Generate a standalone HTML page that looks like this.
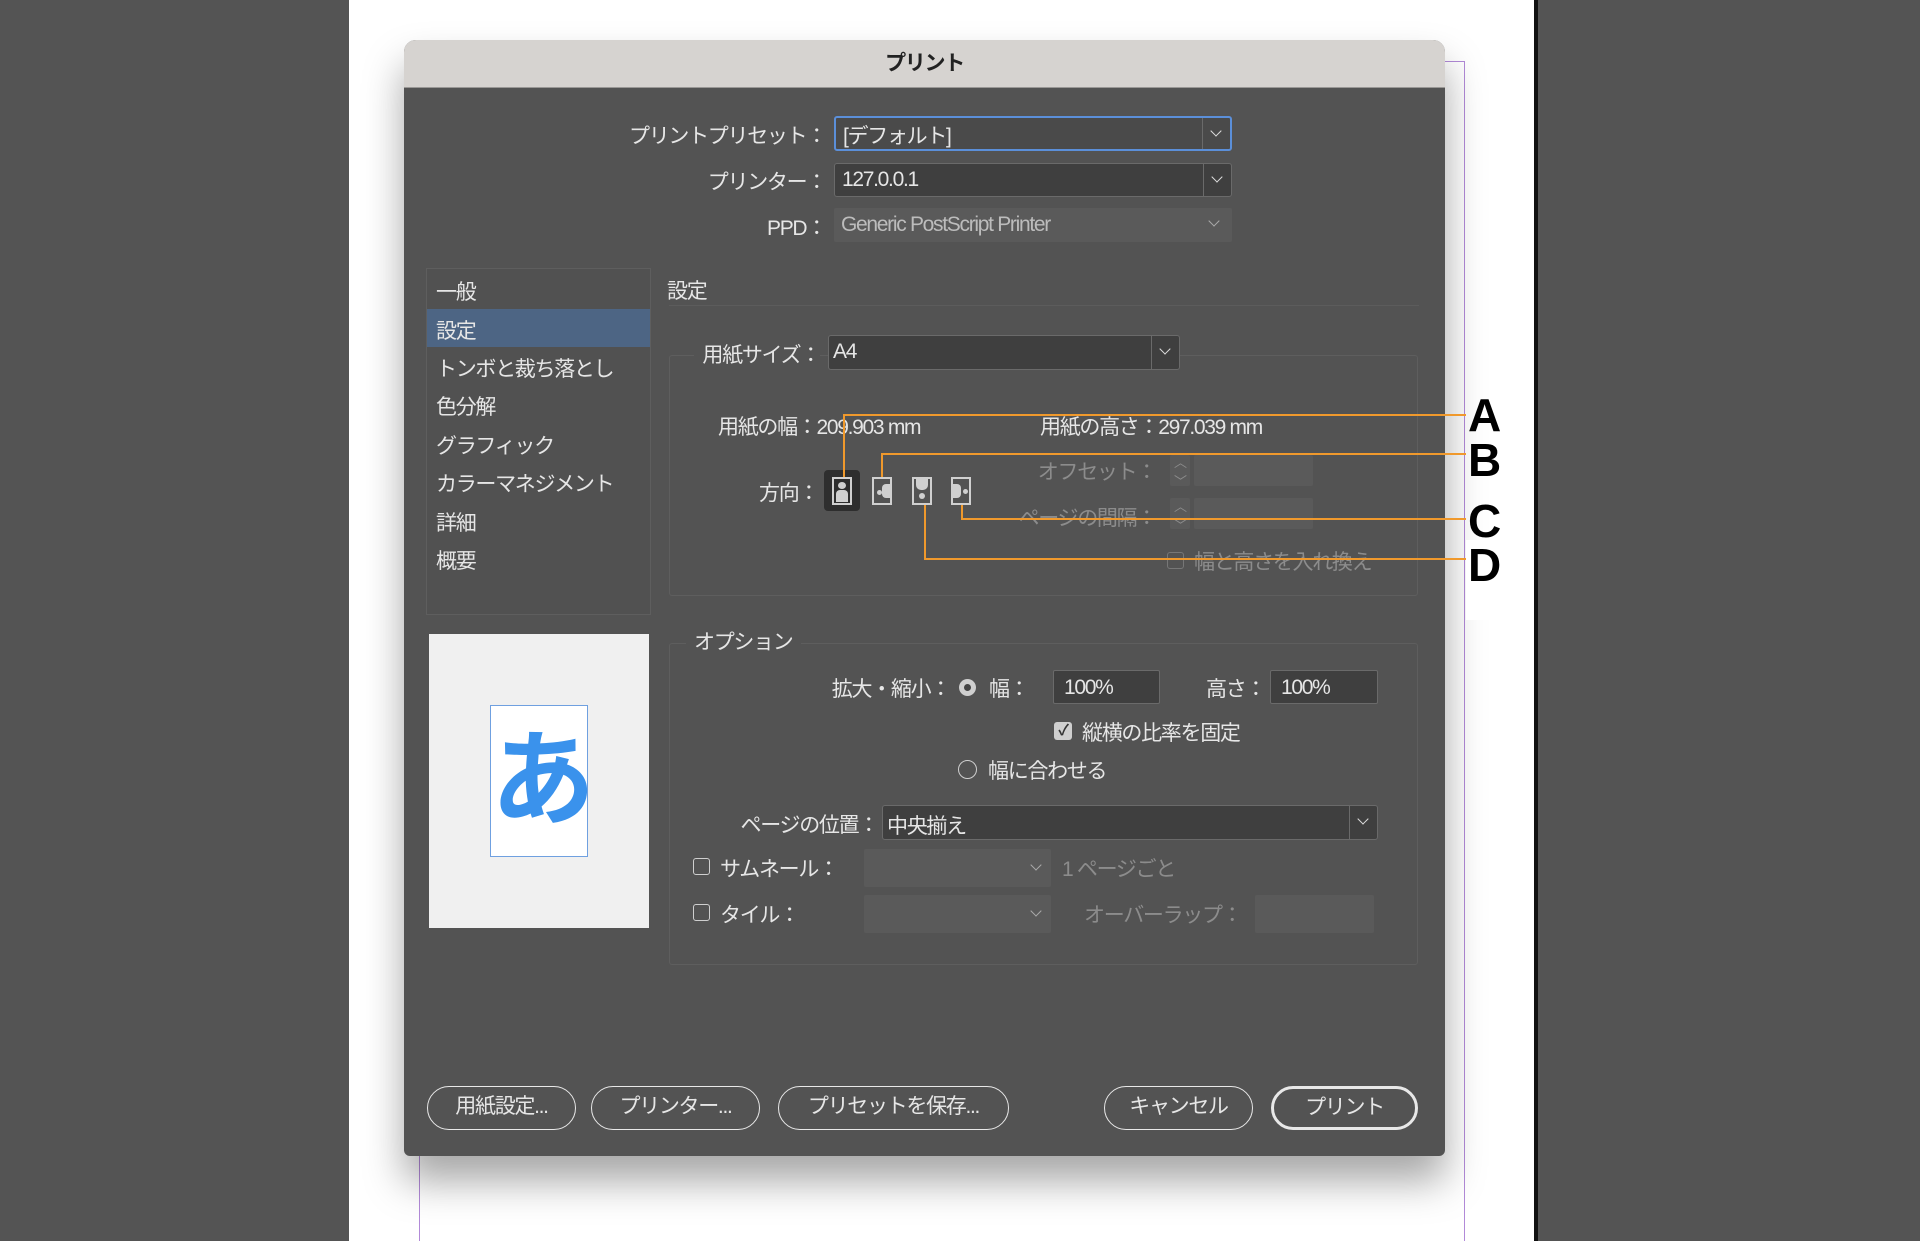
<!DOCTYPE html>
<html><head><meta charset="utf-8"><style>
*{margin:0;padding:0;box-sizing:border-box}
body{width:1920px;height:1241px;position:relative;overflow:hidden;background:#fff;font-family:"Liberation Sans","Noto Sans CJK JP",sans-serif;color:#e6e6e6;font-size:21px;letter-spacing:-1.3px}
.a{position:absolute;white-space:nowrap}
.dis{color:#8c8c8c}
.sel{position:absolute;background:#3f3f3f;border:1px solid #6a6a6a;border-radius:3px}
.sel .v{position:absolute;right:0;top:0;bottom:0;width:28px;border-left:1px solid #6a6a6a}
.chev{position:absolute;width:8px;height:8px;border-right:1.6px solid #ddd;border-bottom:1.6px solid #ddd;transform:rotate(45deg)}
.btn{position:absolute;top:1086px;height:44px;border:1.6px solid #e8e8e8;border-radius:22px;text-align:center;line-height:40px;font-size:21px}
.cb{position:absolute;width:17px;height:17px;border:1.5px solid #cfcfcf;border-radius:3px}
.fld{position:absolute;background:#3f3f3f;border:1px solid #6a6a6a;border-radius:2px;padding-left:10px;line-height:38px}
.dfld{position:absolute;background:#5a5a5a;border-radius:2px}
.or{position:absolute;background:#f0992c}
.ic{position:absolute;top:477px;width:20px;height:28px;border:2.5px solid #d0d0d0}
.L{position:absolute;font-weight:bold;color:#000;font-size:46px;font-family:"Liberation Sans",sans-serif;letter-spacing:0}
</style></head><body>
<div class="a" style="left:0;top:0;width:349px;height:1241px;background:#545454"></div>
<div class="a" style="left:1534px;top:0;width:4px;height:1241px;background:#111"></div>
<div class="a" style="left:1538px;top:0;width:382px;height:1241px;background:#545454"></div>
<div class="a" style="left:1464px;top:61px;width:1px;height:1180px;background:#b28ad8"></div>
<div class="a" style="left:1440px;top:61px;width:25px;height:1px;background:#b28ad8"></div>
<div class="a" style="left:419px;top:1150px;width:1px;height:91px;background:#b28ad8"></div>
<div class="a" style="left:404px;top:40px;width:1041px;height:1116px;background:#535353;border-radius:12px 12px 6px 6px;box-shadow:0 25px 40px rgba(0,0,0,.35);overflow:hidden">
<div class="a" style="left:0;top:0;width:1041px;height:48px;background:#d6d3d0;border-bottom:1px solid #9a9896;text-align:center;line-height:48px;color:#222;font-size:21px;font-weight:bold">プリント</div>
</div>
<div class="a" style="right:1094px;top:120px">プリントプリセット：</div>
<div class="sel" style="left:834px;top:116px;width:398px;height:35px;border:2px solid #5b8fd9;background:#4a4a4a"><span class="a" style="left:7px;top:2px">[デフォルト]</span><div class="v"><div class="chev" style="left:9px;top:9px"></div></div></div>
<div class="a" style="right:1094px;top:166px">プリンター：</div>
<div class="sel" style="left:834px;top:163px;width:398px;height:34px"><span class="a" style="left:7px;top:4px">127.0.0.1</span><div class="v"><div class="chev" style="left:9px;top:9px"></div></div></div>
<div class="a" style="right:1094px;top:212px">PPD：</div>
<div class="dfld" style="left:834px;top:208px;width:398px;height:34px"><span class="a dis" style="left:7px;top:5px;color:#bcbcbc">Generic PostScript Printer</span><div class="chev" style="left:376px;top:9px;border-color:#aaa"></div></div>
<div class="a" style="left:426px;top:268px;width:225px;height:347px;border:1px solid #5e5e5e;background:#515151"></div>
<div class="a" style="left:427px;top:309px;width:223px;height:38px;background:#4d6584"></div>
<div class="a" style="left:436px;top:276px">一般</div>
<div class="a" style="left:436px;top:315px">設定</div>
<div class="a" style="left:436px;top:353px">トンボと裁ち落とし</div>
<div class="a" style="left:436px;top:391px">色分解</div>
<div class="a" style="left:436px;top:430px">グラフィック</div>
<div class="a" style="left:436px;top:468px">カラーマネジメント</div>
<div class="a" style="left:436px;top:507px">詳細</div>
<div class="a" style="left:436px;top:545px">概要</div>
<div class="a" style="left:667px;top:275px">設定</div>
<div class="a" style="left:669px;top:305px;width:750px;height:1px;background:#5c5c5c"></div>
<div class="a" style="left:669px;top:355px;width:749px;height:241px;border:1px solid #5e5e5e;border-radius:3px"></div>
<div class="a" style="right:1100px;top:339px;background:#535353;padding-left:8px">用紙サイズ：</div>
<div class="sel" style="left:828px;top:335px;width:352px;height:35px"><span class="a" style="left:4px;top:4px">A4</span><div class="v"><div class="chev" style="left:9px;top:9px"></div></div></div>
<div class="a" style="left:718px;top:411px">用紙の幅：209.903 mm</div>
<div class="a" style="left:1040px;top:411px">用紙の高さ：297.039 mm</div>
<div class="a" style="left:759px;top:477px">方向：</div>
<div class="a" style="left:824px;top:470px;width:36px;height:41px;background:#2e2e2e;border-radius:4px"></div>
<div class="ic" style="left:832px"><div class="a" style="left:4px;top:3px;width:8px;height:7px;border-radius:50%;background:#d0d0d0"></div><div class="a" style="left:2px;top:11px;width:12px;height:12px;border-radius:4px 4px 0 0;background:#d0d0d0"></div></div>
<div class="ic" style="left:872px"><div class="a" style="left:3px;top:11px;width:5px;height:5px;border-radius:50%;background:#d0d0d0"></div><div class="a" style="left:8px;top:5px;width:8px;height:14px;border-radius:4px 0 0 4px;background:#d0d0d0"></div></div>
<div class="ic" style="left:912px"><div class="a" style="left:2px;top:0;width:12px;height:11px;border-radius:0 0 5px 5px;background:#d0d0d0"></div><div class="a" style="left:5px;top:14px;width:6px;height:6px;border-radius:50%;background:#d0d0d0"></div></div>
<div class="ic" style="left:951px"><div class="a" style="left:0;top:5px;width:8px;height:14px;border-radius:0 4px 4px 0;background:#d0d0d0"></div><div class="a" style="left:10px;top:10px;width:5px;height:5px;border-radius:50%;background:#d0d0d0"></div></div>
<div class="a dis" style="right:764px;top:456px">オフセット：</div>
<div class="a dis" style="right:764px;top:502px">ページの間隔：</div>
<div class="dfld" style="left:1170px;top:455px;width:20px;height:31px"></div>
<div class="dfld" style="left:1194px;top:455px;width:119px;height:31px"></div>
<div class="dfld" style="left:1170px;top:498px;width:20px;height:31px"></div>
<div class="dfld" style="left:1194px;top:498px;width:119px;height:31px"></div>
<div class="a dis" style="left:1174px;top:452px;font-size:13px">︿<br>﹀</div>
<div class="a dis" style="left:1174px;top:496px;font-size:13px">︿<br>﹀</div>
<div class="cb" style="left:1167px;top:552px;border-color:#777"></div>
<div class="a dis" style="left:1194px;top:546px">幅と高さを入れ換え</div>
<div class="or" style="left:843px;top:414px;width:2px;height:63px"></div>
<div class="or" style="left:843px;top:414px;width:623px;height:2px"></div>
<div class="or" style="left:881px;top:453px;width:2px;height:24px"></div>
<div class="or" style="left:881px;top:453px;width:585px;height:2px"></div>
<div class="or" style="left:961px;top:505px;width:2px;height:14px"></div>
<div class="or" style="left:961px;top:518px;width:505px;height:2px"></div>
<div class="or" style="left:924px;top:505px;width:2px;height:55px"></div>
<div class="or" style="left:924px;top:558px;width:542px;height:2px"></div>
<div class="a" style="left:1466px;top:540px;width:48px;height:80px;background:#fff"></div>
<div class="L" style="left:1468px;top:388px">A</div>
<div class="L" style="left:1468px;top:433px">B</div>
<div class="L" style="left:1468px;top:494px">C</div>
<div class="L" style="left:1468px;top:538px">D</div>
<div class="a" style="left:429px;top:634px;width:220px;height:294px;background:#f0f0f0"></div>
<div class="a" style="left:490px;top:705px;width:98px;height:152px;background:#fff;border:1.5px solid #6fa0e0;color:#3a92ec;font-size:104px;font-weight:bold;line-height:150px;text-align:center;letter-spacing:0">あ</div>
<div class="a" style="left:669px;top:643px;width:749px;height:322px;border:1px solid #5e5e5e;border-radius:3px"></div>
<div class="a" style="left:686px;top:626px;background:#535353;padding:0 8px">オプション</div>
<div class="a" style="right:970px;top:673px">拡大・縮小：</div>
<div class="a" style="left:959px;top:679px;width:17px;height:17px;border-radius:50%;background:#cfcfcf"><div class="a" style="left:5px;top:5px;width:7px;height:7px;border-radius:50%;background:#444"></div></div>
<div class="a" style="left:989px;top:673px">幅：</div>
<div class="fld" style="left:1053px;top:670px;width:107px;height:34px;line-height:34px">100%</div>
<div class="a" style="left:1206px;top:673px">高さ：</div>
<div class="fld" style="left:1270px;top:670px;width:108px;height:34px;line-height:34px">100%</div>
<div class="a" style="left:1054px;top:722px;width:18px;height:18px;background:#cfcfcf;border-radius:3px;color:#333;font-size:15px;line-height:18px;text-align:center;font-weight:bold">✓</div>
<div class="a" style="left:1082px;top:717px">縦横の比率を固定</div>
<div class="a" style="left:958px;top:760px;width:19px;height:19px;border-radius:50%;border:1.5px solid #cfcfcf"></div>
<div class="a" style="left:988px;top:755px">幅に合わせる</div>
<div class="a" style="right:1042px;top:809px">ページの位置：</div>
<div class="sel" style="left:882px;top:805px;width:496px;height:35px"><span class="a" style="left:4px;top:4px">中央揃え</span><div class="v"><div class="chev" style="left:9px;top:9px"></div></div></div>
<div class="cb" style="left:693px;top:858px"></div>
<div class="a" style="left:720px;top:853px">サムネール：</div>
<div class="dfld" style="left:864px;top:849px;width:187px;height:38px"><div class="chev" style="left:168px;top:12px;border-color:#aaa"></div></div>
<div class="a dis" style="left:1062px;top:853px">1 ページごと</div>
<div class="cb" style="left:693px;top:904px"></div>
<div class="a" style="left:720px;top:899px">タイル：</div>
<div class="dfld" style="left:864px;top:895px;width:187px;height:38px"><div class="chev" style="left:168px;top:12px;border-color:#aaa"></div></div>
<div class="a dis" style="left:1084px;top:899px">オーバーラップ：</div>
<div class="dfld" style="left:1255px;top:895px;width:119px;height:38px"></div>
<div class="btn" style="left:427px;width:149px">用紙設定...</div>
<div class="btn" style="left:591px;width:169px">プリンター...</div>
<div class="btn" style="left:778px;width:231px">プリセットを保存...</div>
<div class="btn" style="left:1104px;width:149px">キャンセル</div>
<div class="btn" style="left:1271px;width:147px;border-width:3px;line-height:38px">プリント</div>
</body></html>
